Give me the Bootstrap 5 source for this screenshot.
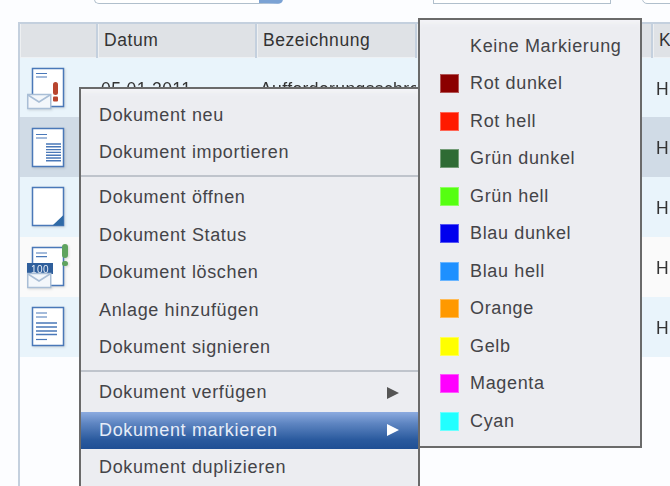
<!DOCTYPE html>
<html lang="de">
<head>
    <meta charset="UTF-8">
    <title>Dokumente</title>
    <link href="https://cdn.jsdelivr.net/npm/bootstrap@5.3.0/dist/css/bootstrap.min.css" rel="stylesheet">
    <style>
        html, body { height: 100%; }
        body { background: #fcfdff; overflow: hidden; position: relative; font-family: "Liberation Sans", Arial, sans-serif; color: #3c3c40; filter: blur(.35px); }
        .top-strip { height: 22px; position: relative; }
        .top-field { position: absolute; top: -14px; height: 18px; background: #fff; border: 1px solid #b0bfcc; border-radius: 5px; }
        .top-field.search { left: 94px; width: 189px; border-right: 24px solid #7ba2d4; }
        .top-field.mid { left: 433px; width: 178px; border-radius: 0; }
        .top-field.end { left: 642px; width: 40px; }
        .doc-grid { margin-left: 18px; border: 2px solid #c4d0de; border-right: 0; border-bottom: 0; height: 470px; font-size: 17.5px; }
        .doc-grid table { table-layout: fixed; width: 652px; border-collapse: collapse; }
        .doc-grid th { background: #dfe2e6; font-weight: 400; height: 33px; padding: 0 0 0 6px; border-right: 2px solid #c4d0de; border-bottom: 1px solid #eef1f4; box-shadow: inset 1px 0 0 #eef0f2; color: #333; letter-spacing: .55px; }
        .doc-grid td { height: 60px; padding: 3px 0 0 4px; white-space: nowrap; overflow: hidden; color: #333; letter-spacing: .4px; }
        .doc-grid td.icon-cell { padding-top: 0; }
        .doc-grid tr.odd td { background: #e9f4fb; }
        .doc-grid tr.sel td { background: #d0dbe6; }
        .doc-grid tr.even td { background: #fafafa; }
        .doc-grid svg { display: block; margin-left: 3px; filter: drop-shadow(1px 1px 1px #0002); }
        .ctx-menu { position: absolute; display: block; background: #ecedf1; border: 2px solid #6a6a6a; border-radius: 0; padding: 0; margin: 0; font-size: 18px; letter-spacing: .65px; min-width: 0; box-shadow: inset 0 6px 6px -4px #f7f7f9; }
        .ctx-menu .dropdown-item { color: #444448; height: 37.5px; line-height: 37.5px; padding: 0; display: flex; align-items: center; background: transparent; }
        .ctx-menu .dropdown-divider { margin: 3px 0 2.5px; border-top: 2px solid #bfc4cc; opacity: 1; }
        .main-menu { left: 79px; top: 87px; width: 341px; height: 420px; padding-top: 7.5px; }
        .main-menu .dropdown-item { padding-left: 18px; }
        .main-menu .dropdown-item.active { color: #e6edf8; background: linear-gradient(#8cabe0, #5f86c2 30%, #2a5a9e 75%, #1f4f94); }
        .sub-arrow { margin-left: auto; margin-right: 19px; width: 0; height: 0; border-left: 12px solid #555; border-top: 6px solid transparent; border-bottom: 6px solid transparent; }
        .active .sub-arrow { border-left-color: #fff; }
        .mark-menu { left: 418px; top: 18px; width: 224px; height: 430px; padding-top: 7.5px; }
        .mark-menu .dropdown-item { padding-left: 20px; gap: 11px; }
        .swatch { width: 19px; height: 19px; flex: none; border: 1px solid #ffffff55; }
    </style>
</head>
<body>
    <div class="top-strip">
        <div class="top-field search"></div>
        <div class="top-field mid"></div>
        <div class="top-field end"></div>
    </div>

    <div class="doc-grid">
        <table>
            <colgroup>
                <col style="width:77px"><col style="width:159px"><col style="width:160px"><col style="width:236px"><col style="width:20px">
            </colgroup>
            <thead>
                <tr><th></th><th>Datum</th><th>Bezeichnung</th><th></th><th>K</th></tr>
            </thead>
            <tbody>
                <tr class="odd">
                    <td class="icon-cell">
                        <svg width="44" height="48" viewBox="0 0 44 48">
                            <path d="M5.5 5.500h31v38h-31z" fill="#fff" stroke="#4a78b8" stroke-width="1.5"/>
                            <path d="M9 10.500h11M9 14h11" stroke="#4a78b8" stroke-width="1.2"/>
                            <rect x="26" y="19" width="5" height="13" rx="2.5" fill="#b8452f"/>
                            <rect x="26" y="33.500" width="5" height="5" rx="1" fill="#b8452f"/>
                            <path d="M.75 31.500h23v14h-23z" fill="#f3f7fb" stroke="#a9bed6" stroke-width="1.500"/>
                            <path d="M1 32l11 7 11-7" fill="none" stroke="#a9bed6" stroke-width="1.500"/>
                        </svg>
                    </td>
                    <td>05.01.2011</td><td>Aufforderungsschreiben</td><td></td><td>H</td>
                </tr>
                <tr class="sel">
                    <td class="icon-cell">
                        <svg width="44" height="48" viewBox="0 0 44 48">
                            <path d="M5.5 5.500h31v38h-31z" fill="#fff" stroke="#4a78b8" stroke-width="1.5"/>
                            <path d="M9 11.500h11M9 15h11" stroke="#4a78b8" stroke-width="1.2"/>
                            <path d="M19 21h15M19 23.800h15M19 26.600h15M19 29.400h15M19 32.200h15M19 35h15M19 37.800h15" stroke="#4a78b8" stroke-width="1.400"/>
                        </svg>
                    </td>
                    <td></td><td></td><td></td><td>H</td>
                </tr>
                <tr class="odd">
                    <td class="icon-cell">
                        <svg width="44" height="48" viewBox="0 0 44 48">
                            <path d="M5.5 4.500h31v38h-31z" fill="#fff" stroke="#4a78b8" stroke-width="1.5"/>
                            <path d="M36.500 32v10.500h-11z" fill="#2f6aa6"/>
                        </svg>
                    </td>
                    <td></td><td></td><td></td><td>H</td>
                </tr>
                <tr class="even">
                    <td class="icon-cell">
                        <svg width="44" height="48" viewBox="0 0 44 48">
                            <path d="M5.5 4.500h31v38h-31z" fill="#fff" stroke="#4a78b8" stroke-width="1.5"/>
                            <path d="M9 10h11M9 13.700h11" stroke="#4a78b8" stroke-width="1.2"/>
                            <rect x="35" y="1" width="6" height="14" rx="3" fill="#5fa35f"/>
                            <rect x="35" y="18" width="6" height="5" rx="2.5" fill="#5fa35f"/>
                            <rect x="0" y="20" width="26" height="11" fill="#2f5f9c"/>
                            <text x="13" y="30" text-anchor="middle" font-size="10" fill="#e8eef6" font-family="Liberation Sans, sans-serif">100</text>
                            <path d="M.75 30.500h23v14h-23z" fill="#f3f7fb" stroke="#a9bed6" stroke-width="1.500"/>
                            <path d="M1 31l11 7 11-7" fill="none" stroke="#a9bed6" stroke-width="1.500"/>
                        </svg>
                    </td>
                    <td></td><td></td><td></td><td>H</td>
                </tr>
                <tr class="odd">
                    <td class="icon-cell">
                        <svg width="44" height="48" viewBox="0 0 44 48">
                            <path d="M5.5 4.500h31v38h-31z" fill="#fff" stroke="#4a78b8" stroke-width="1.5"/>
                            <path d="M9 10h11M9 14h11" stroke="#4a78b8" stroke-width="1.2"/>
                            <path d="M9 20h21M9 24h21M9 28h21M9 31.500h21" stroke="#4a78b8" stroke-width="1.400"/>
                            <path d="M9 36.500h11" stroke="#4a78b8" stroke-width="1.2"/>
                        </svg>
                    </td>
                    <td></td><td></td><td></td><td>H</td>
                </tr>
            </tbody>
        </table>
    </div>

    <ul class="dropdown-menu ctx-menu main-menu list-unstyled">
        <li><span class="dropdown-item">Dokument neu</span></li>
        <li><span class="dropdown-item">Dokument importieren</span></li>
        <li><hr class="dropdown-divider"></li>
        <li><span class="dropdown-item">Dokument öffnen</span></li>
        <li><span class="dropdown-item">Dokument Status</span></li>
        <li><span class="dropdown-item">Dokument löschen</span></li>
        <li><span class="dropdown-item">Anlage hinzufügen</span></li>
        <li><span class="dropdown-item">Dokument signieren</span></li>
        <li><hr class="dropdown-divider"></li>
        <li><span class="dropdown-item">Dokument verfügen<i class="sub-arrow"></i></span></li>
        <li><span class="dropdown-item active">Dokument markieren<i class="sub-arrow"></i></span></li>
        <li><span class="dropdown-item">Dokument duplizieren</span></li>
    </ul>

    <ul class="dropdown-menu ctx-menu mark-menu list-unstyled">
        <li><span class="dropdown-item"><i class="swatch" style="background:transparent;border:0"></i>Keine Markierung</span></li>
        <li><span class="dropdown-item"><i class="swatch" style="background:#8b0000"></i>Rot dunkel</span></li>
        <li><span class="dropdown-item"><i class="swatch" style="background:#ff1a00"></i>Rot hell</span></li>
        <li><span class="dropdown-item"><i class="swatch" style="background:#2e6b34"></i>Grün dunkel</span></li>
        <li><span class="dropdown-item"><i class="swatch" style="background:#55ff11"></i>Grün hell</span></li>
        <li><span class="dropdown-item"><i class="swatch" style="background:#0000ee"></i>Blau dunkel</span></li>
        <li><span class="dropdown-item"><i class="swatch" style="background:#1e90ff"></i>Blau hell</span></li>
        <li><span class="dropdown-item"><i class="swatch" style="background:#ff9900"></i>Orange</span></li>
        <li><span class="dropdown-item"><i class="swatch" style="background:#ffff00"></i>Gelb</span></li>
        <li><span class="dropdown-item"><i class="swatch" style="background:#ff00ff"></i>Magenta</span></li>
        <li><span class="dropdown-item"><i class="swatch" style="background:#22ffff"></i>Cyan</span></li>
    </ul>
    <script src="https://cdn.jsdelivr.net/npm/bootstrap@5.3.0/dist/js/bootstrap.bundle.min.js"></script>
</body>
</html>
